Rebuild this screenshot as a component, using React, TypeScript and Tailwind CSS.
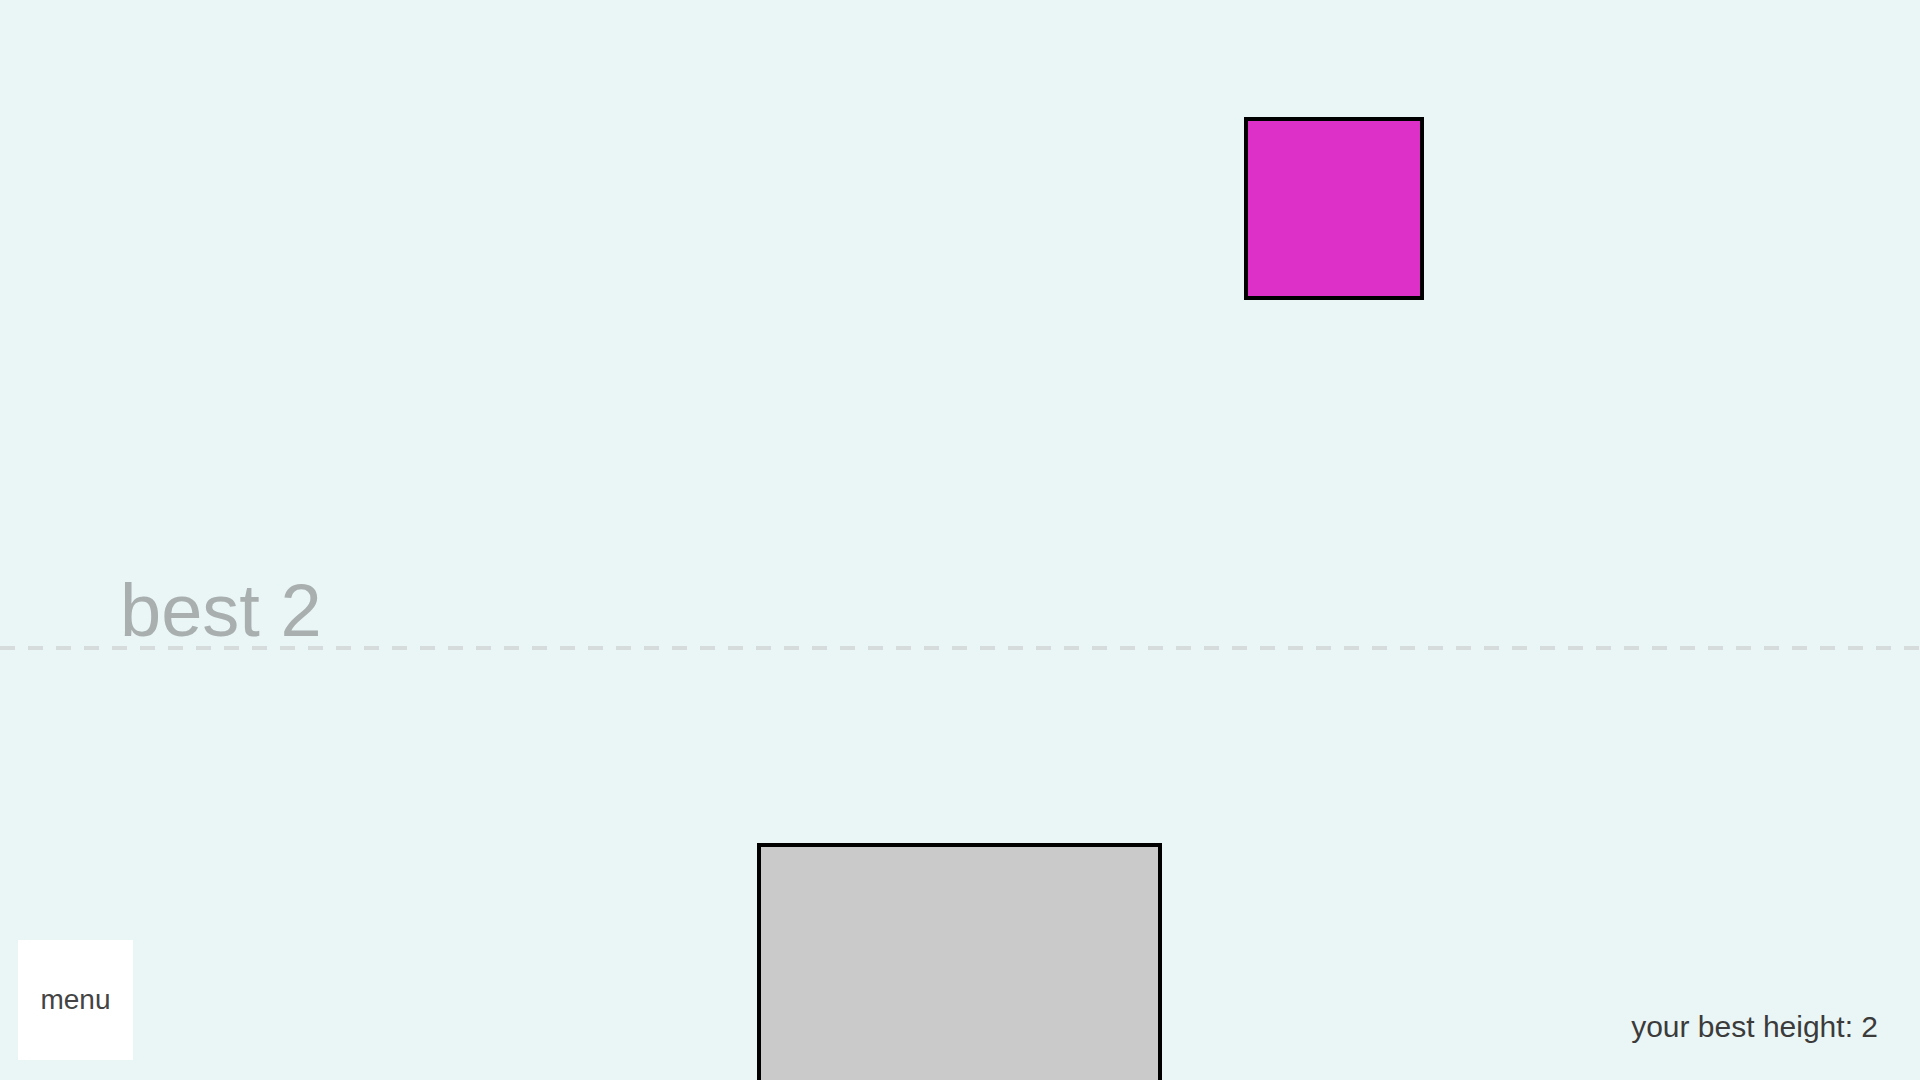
const font = { fontFamily: '"Liberation Sans", Arial, sans-serif' };

// one falling block above, the tower base below
function Block({ className }: { className: string }) {
  return <div className={`absolute border-[4px] border-black ${className}`} />;
}

export default function App() {
  return (
    <div className="relative h-[1080px] w-[1920px] overflow-hidden bg-[#eaf6f6]" style={font}>
      {/* best-height marker */}
      <div className="absolute left-0 right-0 top-[646px] h-[4px] bg-[repeating-linear-gradient(90deg,#d6dcdc_0px,#d6dcdc_15px,transparent_15px,transparent_28px)]" />
      <div className="absolute left-[120px] top-[574px] text-[74px] leading-none text-[#a9afaf]">best 2</div>

      <Block className="left-[1244px] top-[117px] h-[183px] w-[180px] bg-[#dc30c8]" />
      <Block className="left-[757px] top-[843px] h-[280px] w-[405px] bg-[#cacaca]" />

      <button
        className="absolute bottom-[20px] left-[18px] flex h-[120px] w-[115px] items-center justify-center bg-white text-[28px] text-[#444]"
        type="button"
      >
        menu
      </button>

      <div className="absolute bottom-[38px] right-[42px] text-[30px] leading-none text-[#3b3b3b]">your best height: 2</div>
    </div>
  );
}
